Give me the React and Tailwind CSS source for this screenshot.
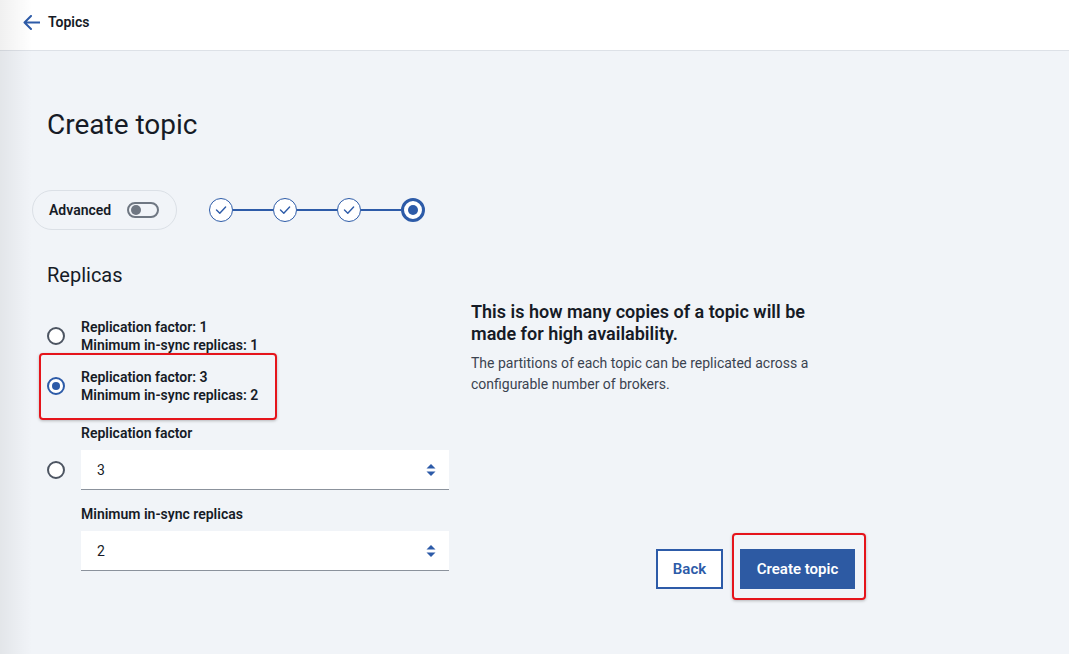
const ink = 'text-[#161b26]';

function Radio({ checked }) {
  return (
    <div
      className={`w-[18px] h-[18px] shrink-0 rounded-full border-2 flex items-center justify-center bg-white ${
        checked ? 'border-[#2d5ba8]' : 'border-[#4d5562]'
      }`}
    >
      {checked && <div className="w-[8px] h-[8px] rounded-full bg-[#2d5ba8]" />}
    </div>
  );
}

function CheckStep() {
  return (
    <div className="w-6 h-6 rounded-full border-[1.5px] border-[#2d5ba8] bg-white flex items-center justify-center">
      <svg width="14" height="14" viewBox="0 0 14 14" fill="none">
        <path d="M2.5 7 L5.8 10.2 L11.6 4" stroke="#2d5ba8" strokeWidth="1.4" strokeLinecap="round" strokeLinejoin="round" />
      </svg>
    </div>
  );
}

function Spinner() {
  return (
    <svg width="10" height="14" viewBox="0 0 10 14">
      <path d="M0.5 5.5 L5 1 L9.5 5.5 Z" fill="#2d5ba8" />
      <path d="M0.5 8.5 L5 13 L9.5 8.5 Z" fill="#2d5ba8" />
    </svg>
  );
}

function NumberField({ value }) {
  return (
    <div className="h-10 w-[368px] bg-white border-b border-[#8b929c] flex items-center justify-between pl-4 pr-[13px]">
      <span className={`text-sm ${ink}`}>{value}</span>
      <Spinner />
    </div>
  );
}

export default function App() {
  return (
    <div className="relative min-h-[654px] bg-[#f1f4f8] font-['Roboto','Noto_Sans',sans-serif]">
      {/* faint shade on the left edge */}
      <div className="pointer-events-none absolute inset-y-0 left-0 w-8 bg-gradient-to-r from-black/[0.06] to-transparent z-10" />

      <header className="h-[51px] bg-white border-b border-[#dde1e7] flex items-center pl-[23px] pb-[6px] gap-[8px]">
        <svg width="17" height="15" viewBox="0 0 17 15" fill="none">
          <path d="M8 1 L1.5 7.5 L8 14 M1.5 7.5 H16.5" stroke="#2d5ba8" strokeWidth="2" strokeLinecap="round" strokeLinejoin="round" />
        </svg>
        <span className={`text-sm font-semibold ${ink}`}>Topics</span>
      </header>

      <main className="pl-[47px] pt-[56px]">
        <h1 className={`text-[28px] leading-9 ${ink}`}>Create topic</h1>

        <div className="mt-[47px] flex items-center">
          <div className="-ml-[15px] h-10 pl-4 pr-[17px] rounded-full border border-[#dbe0e6] flex items-center gap-[16px]">
            <span className={`text-sm font-semibold ${ink}`}>Advanced</span>
            <div className="w-8 h-4 rounded-full border-2 border-[#6f7782] flex items-center pl-[2px]">
              <div className="w-[10px] h-[10px] rounded-full bg-[#6f7782]" />
            </div>
          </div>
          <div className="ml-8 flex items-center">
            <CheckStep />
            <div className="w-10 h-[2px] bg-[#2d5ba8]" />
            <CheckStep />
            <div className="w-10 h-[2px] bg-[#2d5ba8]" />
            <CheckStep />
            <div className="w-10 h-[2px] bg-[#2d5ba8]" />
            <div className="w-6 h-6 rounded-full border-[3px] border-[#2d5ba8] bg-white flex items-center justify-center">
              <div className="w-[10px] h-[10px] rounded-full bg-[#2d5ba8]" />
            </div>
          </div>
        </div>

        <div className="mt-[31px] flex gap-[22px]">
          {/* left column */}
          <div className="w-[402px]">
            <h2 className={`text-xl leading-7 ${ink}`}>Replicas</h2>

            <div className="mt-[29px] flex items-center gap-4">
              <Radio />
              <div className={`text-sm leading-[18px] font-semibold ${ink}`}>
                <div>Replication factor: 1</div>
                <div>Minimum in-sync replicas: 1</div>
              </div>
            </div>

            <div className="relative mt-[14px] w-fit flex items-center gap-4">
              <Radio checked />
              <div className={`text-sm leading-[18px] font-semibold ${ink}`}>
                <div>Replication factor: 3</div>
                <div>Minimum in-sync replicas: 2</div>
              </div>
              <div className="absolute left-[-8px] top-[-15px] right-[-19px] bottom-[-16px] border-2 border-[#e5141b] rounded-[4px] shadow-[0_1px_3px_rgba(0,0,0,0.25)]" />
            </div>

            <div className={`mt-[20px] pl-[34px] text-sm leading-[18px] font-semibold ${ink}`}>Replication factor</div>
            <div className="mt-2 flex items-center gap-4">
              <Radio />
              <NumberField value="3" />
            </div>
            <div className={`mt-[15px] pl-[34px] text-sm leading-[18px] font-semibold ${ink}`}>Minimum in-sync replicas</div>
            <div className="mt-2 pl-[34px]">
              <NumberField value="2" />
            </div>
          </div>

          {/* right column */}
          <div className="w-[384px] pt-10">
            <h3 className={`max-w-[352px] text-lg leading-[22px] font-semibold ${ink}`}>
              This is how many copies of a topic will be made for high availability.
            </h3>
            <p className="mt-2 text-sm leading-[21px] text-[#3b4350] pr-4">
              The partitions of each topic can be replicated across a configurable number of brokers.
            </p>

            <div className="mt-[154px] flex justify-end gap-[17px]">
              <button className="h-10 w-[67px] border-2 border-[#2d5ba8] text-[#2d5ba8] text-[15px] font-semibold bg-white">
                Back
              </button>
              <div className="relative">
                <button className="h-10 w-[115px] bg-[#2d5aa3] text-white text-[15px] font-semibold">Create topic</button>
                <div className="absolute left-[-8px] top-[-16px] right-[-11px] bottom-[-11px] border-2 border-[#e5141b] rounded-[4px] shadow-[0_1px_3px_rgba(0,0,0,0.25)]" />
              </div>
            </div>
          </div>
        </div>
      </main>
    </div>
  );
}
